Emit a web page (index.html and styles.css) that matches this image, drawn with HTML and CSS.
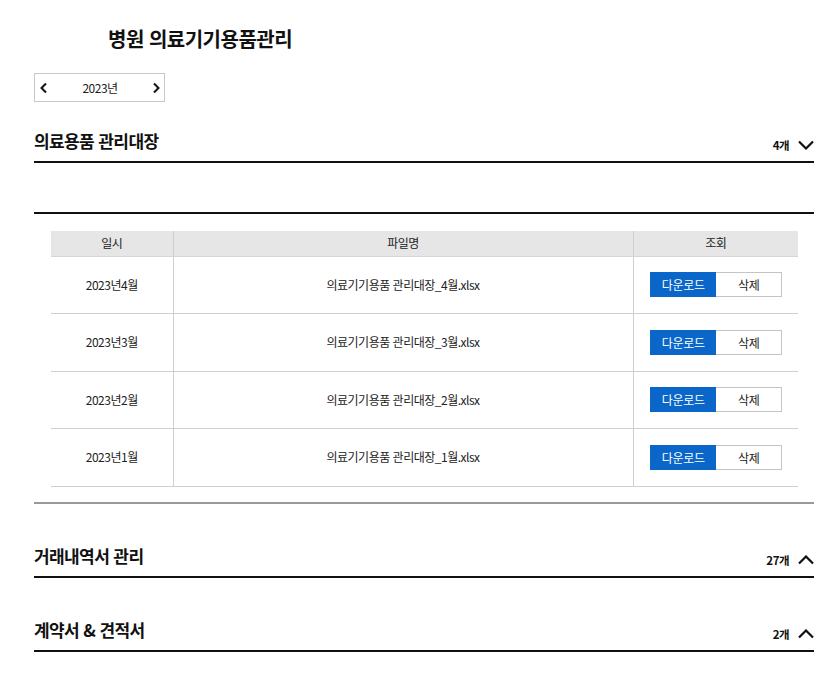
FILE: index.html
```html
<!DOCTYPE html>
<html lang="ko">
<head>
<meta charset="utf-8">
<title>병원 의료기기용품관리</title>
<link rel="stylesheet" href="styles.css">
</head>
<body>
<div class="page">
  <h1 class="title">병원 의료기기용품관리</h1>

  <div class="year-picker">
    <button class="year-btn" aria-label="이전">
      <svg width="10" height="12" viewBox="0 0 10 12"><path d="M7 1.5 L2.5 6 L7 10.5" fill="none" stroke="#111" stroke-width="2"/></svg>
    </button>
    <span class="year-text">2023년</span>
    <button class="year-btn" aria-label="다음">
      <svg width="10" height="12" viewBox="0 0 10 12"><path d="M3 1.5 L7.5 6 L3 10.5" fill="none" stroke="#111" stroke-width="2"/></svg>
    </button>
  </div>

  <section class="section open">
    <div class="section-head">
      <h2 class="section-title">의료용품 관리대장</h2>
      <div class="section-meta">
        <span class="count">4개</span>
        <svg class="chev" width="16" height="10" viewBox="0 0 16 10"><path d="M1 1.5 L8 8.5 L15 1.5" fill="none" stroke="#111" stroke-width="2.2"/></svg>
      </div>
    </div>
    <div class="panel">
      <div class="filter-area"></div>
      <table class="files">
        <thead>
          <tr><th class="c-date">일시</th><th class="c-name">파일명</th><th class="c-act">조회</th></tr>
        </thead>
        <tbody>
          <tr>
            <td>2023년4월</td><td>의료기기용품 관리대장_4월.xlsx</td>
            <td><div class="btns"><button class="btn btn-primary">다운로드</button><button class="btn btn-line">삭제</button></div></td>
          </tr>
          <tr>
            <td>2023년3월</td><td>의료기기용품 관리대장_3월.xlsx</td>
            <td><div class="btns"><button class="btn btn-primary">다운로드</button><button class="btn btn-line">삭제</button></div></td>
          </tr>
          <tr>
            <td>2023년2월</td><td>의료기기용품 관리대장_2월.xlsx</td>
            <td><div class="btns"><button class="btn btn-primary">다운로드</button><button class="btn btn-line">삭제</button></div></td>
          </tr>
          <tr>
            <td>2023년1월</td><td>의료기기용품 관리대장_1월.xlsx</td>
            <td><div class="btns"><button class="btn btn-primary">다운로드</button><button class="btn btn-line">삭제</button></div></td>
          </tr>
        </tbody>
      </table>
    </div>
  </section>

  <section class="section">
    <div class="section-head">
      <h2 class="section-title">거래내역서 관리</h2>
      <div class="section-meta">
        <span class="count">27개</span>
        <svg class="chev" width="16" height="10" viewBox="0 0 16 10"><path d="M1 8.5 L8 1.5 L15 8.5" fill="none" stroke="#111" stroke-width="2.2"/></svg>
      </div>
    </div>
  </section>

  <section class="section">
    <div class="section-head">
      <h2 class="section-title">계약서 &amp; 견적서</h2>
      <div class="section-meta">
        <span class="count">2개</span>
        <svg class="chev" width="16" height="10" viewBox="0 0 16 10"><path d="M1 8.5 L8 1.5 L15 8.5" fill="none" stroke="#111" stroke-width="2.2"/></svg>
      </div>
    </div>
  </section>
</div>
</body>
</html>
```

FILE: styles.css
```css
* { box-sizing: border-box; }

html, body {
  margin: 0;
  padding: 0;
  background: #fff;
}

body {
  font-family: "Noto Sans CJK KR", "Noto Sans", sans-serif;
  color: #111;
}

.page {
  width: 780px;
  margin-left: 34px;
  padding-top: 25px;
  padding-bottom: 30px;
}

.title {
  margin: 0 0 20px 74px;
  font-size: 20px;
  line-height: 28px;
  font-weight: 700;
  letter-spacing: -0.5px;
}

.year-picker {
  width: 131px;
  height: 29px;
  border: 1px solid #c8c8c8;
  display: flex;
  align-items: center;
  justify-content: space-between;
  padding: 0 3px 0 4px;
}

.year-btn {
  border: 0;
  background: none;
  padding: 0;
  width: 10px;
  height: 12px;
  display: flex;
  align-items: center;
  justify-content: center;
  cursor: pointer;
}

.year-text {
  font-size: 12px;
  letter-spacing: -0.5px;
  line-height: 16px;
  color: #222;
}

.section {
  margin-top: 40px;
}

.section.open {
  margin-top: 27px;
}

.section-head {
  display: flex;
  justify-content: space-between;
  align-items: flex-end;
  padding-bottom: 8px;
  border-bottom: 2px solid #111;
}

.section-title {
  margin: 0;
  font-size: 17px;
  line-height: 24px;
  font-weight: 700;
  letter-spacing: -0.6px;
}

.section-meta {
  display: flex;
  align-items: center;
  gap: 9px;
  height: 16px;
}

.count {
  font-size: 11.5px;
  font-weight: 700;
  line-height: 16px;
  letter-spacing: -0.5px;
}

.chev {
  display: block;
}

.panel {
  border-bottom: 2px solid #999;
  padding-bottom: 15px;
}

.filter-area {
  height: 51px;
  border-bottom: 2px solid #111;
  margin-bottom: 17px;
}

.files {
  width: 747px;
  margin-left: 17px;
  border-collapse: collapse;
  font-size: 12px;
  letter-spacing: -0.5px;
  color: #222;
}

.files th {
  background: #e6e6e6;
  font-weight: 400;
  height: 25px;
  padding: 0;
  line-height: 16px;
  border-bottom: 1px solid #d6d6d6;
}

.files td {
  height: 57.5px;
  padding: 0;
  text-align: center;
  line-height: 16px;
  border-bottom: 1px solid #cfcfcf;
}

.files th + th,
.files td + td {
  border-left: 1px solid #cfcfcf;
}

.c-date { width: 122px; }
.c-name { width: 460px; }
.c-act { width: 165px; }

.btns {
  display: flex;
  justify-content: center;
  padding-left: 1px;
}

.btn {
  width: 66px;
  height: 25px;
  font-family: inherit;
  font-size: 12px;
  letter-spacing: -0.3px;
  padding: 0;
  cursor: pointer;
}

.btn-primary {
  background: #0a66c8;
  color: #fff;
  border: 1px solid #0a66c8;
}

.btn-line {
  background: #fff;
  color: #222;
  border: 1px solid #c4c4c4;
  border-left: 0;
}
```
